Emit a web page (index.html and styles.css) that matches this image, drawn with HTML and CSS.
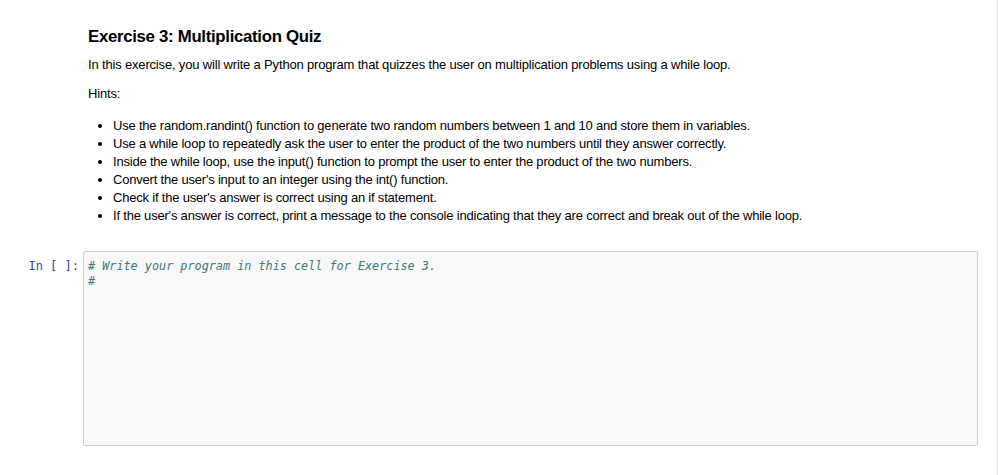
FILE: index.html
```html
<!DOCTYPE html>
<html lang="en">
<head>
<meta charset="utf-8">
<title>Exercise 3: Multiplication Quiz</title>
<link rel="stylesheet" href="styles.css">
</head>
<body>
<div class="notebook">
  <div class="md-cell">
    <h3 class="md-title">Exercise 3: Multiplication Quiz</h3>
    <p class="md-text">In this exercise, you will write a Python program that quizzes the user on multiplication problems using a while loop.</p>
    <p class="md-text hints">Hints:</p>
    <ul class="md-list">
      <li>Use the random.randint() function to generate two random numbers between 1 and 10 and store them in variables.</li>
      <li>Use a while loop to repeatedly ask the user to enter the product of the two numbers until they answer correctly.</li>
      <li>Inside the while loop, use the input() function to prompt the user to enter the product of the two numbers.</li>
      <li>Convert the user's input to an integer using the int() function.</li>
      <li>Check if the user's answer is correct using an if statement.</li>
      <li>If the user's answer is correct, print a message to the console indicating that they are correct and break out of the while loop.</li>
    </ul>
  </div>
  <div class="code-cell">
    <div class="prompt">In&nbsp;[&nbsp;]:</div>
    <div class="input-area">
      <pre class="code"><span class="comment"># Write your program in this cell for Exercise 3.</span>
<span class="comment">#</span></pre>
    </div>
  </div>
</div>
</body>
</html>
```
FILE: styles.css
```css
html, body {
  margin: 0;
  padding: 0;
  background: #ffffff;
}

.notebook {
  width: 997px;
  height: 475px;
  border-right: 1px solid #dddddd;
  box-sizing: content-box;
  font-family: "Liberation Sans", Arial, sans-serif;
  color: #000000;
}

.md-cell {
  padding: 27px 0 0 88px;
}

.md-title {
  margin: 0;
  font-size: 16.8px;
  line-height: 20px;
  font-weight: bold;
  letter-spacing: -0.3px;
}

.md-text {
  margin: 9px 0 0 0;
  font-size: 13px;
  line-height: 18px;
  letter-spacing: -0.17px;
}

.hints {
  margin-top: 11px;
}

.md-list {
  margin: 14px 0 0 0;
  padding-left: 25px;
  font-size: 13px;
  line-height: 18px;
  letter-spacing: -0.2px;
}

.code-cell {
  display: flex;
  margin-top: 26px;
}

.prompt {
  width: 79px;
  flex: none;
  text-align: right;
  padding-top: 8px;
  font-family: "DejaVu Sans Mono", "Liberation Mono", monospace;
  font-size: 12px;
  line-height: 15px;
  color: #303f9f;
}

.input-area {
  margin-left: 4px;
  width: 893px;
  height: 193px;
  background: #f7f7f7;
  border: 1px solid #cfcfcf;
  border-radius: 2px;
}

.code {
  margin: 0;
  padding: 7px 4px;
  font-family: "DejaVu Sans Mono", "Liberation Mono", monospace;
  font-size: 11.8px;
  line-height: 14.5px;
}

.comment {
  color: #3b7a7a;
  font-style: italic;
}
```
